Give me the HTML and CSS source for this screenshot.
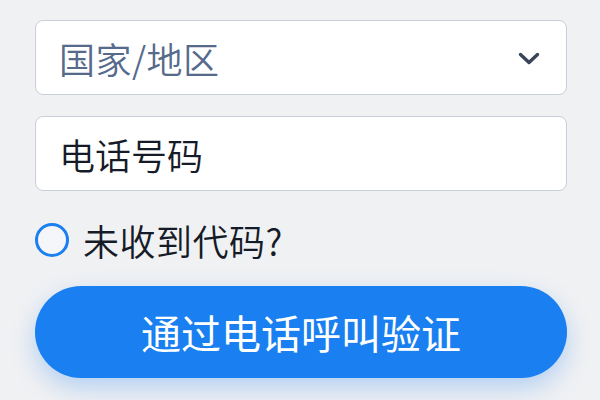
FILE: index.html
```html
<!DOCTYPE html>
<html lang="zh-CN">
<head>
<meta charset="utf-8">
<link rel="stylesheet" href="styles.css">
</head>
<body>
<div class="form">
  <div class="field select">
    <span class="placeholder">国家/地区</span>
    <svg class="chevron" width="22" height="14" viewBox="0 0 22 14"><path d="M2.5 2.5 L11 10.5 L19.5 2.5" fill="none" stroke="#3a4458" stroke-width="3.4" stroke-linecap="round" stroke-linejoin="round"/></svg>
  </div>
  <div class="field phone">
    <span class="value">电话号码</span>
  </div>
  <div class="radio-row">
    <span class="radio"></span>
    <span class="radio-label">未收到代码?</span>
  </div>
  <button class="btn">通过电话呼叫验证</button>
</div>
</body>
</html>
```
FILE: styles.css
```css
html, body {
  margin: 0;
  padding: 0;
}
body {
  width: 600px;
  height: 400px;
  overflow: hidden;
  background: #f0f1f3;
  font-family: "Noto Sans CJK SC", "Noto Sans", sans-serif;
  font-weight: 350;
}
.form {
  display: flex;
  flex-direction: column;
  padding: 20px 33px 0 35px;
}
.field {
  box-sizing: border-box;
  height: 75px;
  background: #ffffff;
  border: 1px solid #c9ced8;
  border-radius: 8px;
  display: flex;
  align-items: center;
  padding: 0 24px 0 23px;
  font-size: 36px;
}
.select {
  justify-content: space-between;
}
.placeholder {
  color: #566a8b;
  letter-spacing: 0.5px;
}
.chevron {
  margin-right: 2px;
  margin-top: 2px;
}
.phone {
  margin-top: 21px;
}
.value {
  color: #161b28;
}
.radio-row {
  display: flex;
  align-items: center;
  margin-top: 31px;
  height: 36px;
}
.radio {
  box-sizing: border-box;
  width: 34px;
  height: 34px;
  border: 3px solid #1a7ff0;
  border-radius: 50%;
  background: #f4f6f9;
}
.radio-label {
  margin-left: 14px;
  font-size: 36px;
  color: #161b28;
  line-height: 36px;
  letter-spacing: 0.5px;
}
.btn {
  margin-top: 28px;
  height: 92px;
  border: none;
  border-radius: 46px;
  background: #1a7ff0;
  color: #ffffff;
  font-family: "Noto Sans CJK SC", "Noto Sans", sans-serif;
  font-weight: 400;
  font-size: 40px;
  box-shadow: 0 10px 24px rgba(26, 127, 240, 0.28);
  padding: 0;
}
```
